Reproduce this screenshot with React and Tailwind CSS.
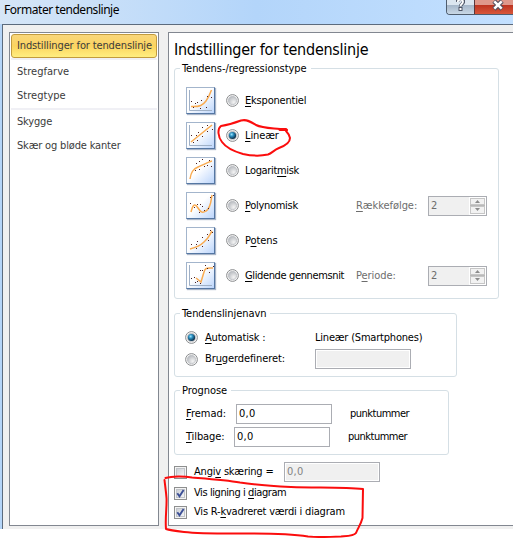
import React from "react";
import clsx from "clsx";

const menuGroups = [
  ["Indstillinger for tendenslinje"],
  ["Stregfarve", "Stregtype"],
  ["Skygge", "Skær og bløde kanter"],
];

const types = [
  {
    pre: "",
    key: "E",
    post: "ksponentiel",
    tracking: "tracking-[-0.2px]",
    axes: true,
    curve: "M5 19.5C14 20 17 18 20 14C23 10 24 7 25.5 3",
    dots: [[5, 14], [9, 16], [11, 15], [15, 13], [21, 9], [7, 20], [14, 21], [20, 20], [25, 10]],
  },
  {
    pre: "",
    key: "L",
    post: "ineær",
    tracking: "tracking-[-0.1px]",
    axes: true,
    curve: "M5 20L26 3",
    dots: [[5, 13], [10, 13], [12, 10], [16, 5], [21, 3], [7, 20], [11, 18], [16, 14], [21, 9], [26, 7]],
  },
  {
    pre: "Logarit",
    key: "m",
    post: "isk",
    tracking: "tracking-[-0.35px]",
    axes: false,
    curve: "M4 22C5 15 7 12 12 10C17 8 22 5 26 4",
    dots: [[10, 6], [13, 4], [16, 2], [23, 3], [9, 13], [13, 12], [18, 9], [21, 8], [25, 9]],
  },
  {
    pre: "",
    key: "P",
    post: "olynomisk",
    tracking: "tracking-[-0.3px]",
    axes: false,
    curve: "M5 20C7 12 9 11 12 16C15 21 17 21 20 19C25 16 25 8 26 3",
    dots: [[4, 11], [8, 15], [11, 12], [14, 12], [16, 14], [13, 20], [18, 18], [22, 16], [24, 5], [27, 3]],
  },
  {
    pre: "P",
    key: "o",
    post: "tens",
    tracking: "tracking-[-0.1px]",
    axes: false,
    curve: "M4 22C12 20 15 18 18 15C23 11 23 9 26 4",
    dots: [[5, 17], [10, 17], [11, 14], [16, 10], [21, 7], [10, 21], [16, 19], [22, 13], [26, 5], [24, 3]],
  },
  {
    pre: "",
    key: "G",
    post: "lidende gennemsnit",
    tracking: "tracking-[-0.37px]",
    axes: true,
    curve: "M10 16L15 20L18 10C19 6 21 6 24 6L27 6",
    dots: [[5, 16], [8, 15], [9, 20], [11, 19], [14, 21], [14, 8], [16, 8], [19, 3], [21, 6], [23, 10], [27, 4]],
  },
];

// One-line label with an underlined access key
const Label = ({ pre = "", hot = "", post = "", className }) => (
  <span className={clsx("block shrink-0 whitespace-nowrap", className)}>
    {pre}
    {hot && <span className="underline underline-offset-2">{hot}</span>}
    {post}
  </span>
);

const Radio = ({ checked }) => (
  <svg width="13" height="13" viewBox="0 0 13 13" className="shrink-0">
    <defs>
      <radialGradient id="radioOff" cx=".65" cy=".7" r=".7">
        <stop offset="0" stopColor="#f4f4f4" />
        <stop offset="1" stopColor="#b9bcc1" />
      </radialGradient>
      <radialGradient id="radioOn" cx=".38" cy=".35" r=".65">
        <stop offset="0" stopColor="#9de6ff" />
        <stop offset=".4" stopColor="#2b8fc0" />
        <stop offset="1" stopColor="#0b2b45" />
      </radialGradient>
    </defs>
    <circle cx="6.5" cy="6.5" r="5.9" fill="#f6f6f6" stroke="#8b8d8f" />
    <circle cx="6.5" cy="6.5" r="4.2" fill="url(#radioOff)" stroke="#b6b9be" strokeWidth=".6" />
    {checked && <circle cx="6.5" cy="6.5" r="3.6" fill="url(#radioOn)" />}
  </svg>
);

const Checkbox = ({ checked }) => (
  <span className="flex size-[13px] shrink-0 items-center justify-center border border-[#8e8f8f] bg-[#f4f4f4]">
    <span className="flex size-[9px] items-center justify-center border border-[#c0c3c8] bg-linear-to-br from-[#cdd0d6] to-[#f4f5f6]">
      {checked && (
        <svg width="9" height="9" viewBox="0 0 9 9" className="shrink-0">
          <path d="M1.3 4.3L3.5 7.3L7.6 1" fill="none" stroke="#3c4f96" strokeWidth="1.9" />
        </svg>
      )}
    </span>
  </span>
);

const Thumb = ({ axes, curve, dots }) => (
  <span className="block h-[27px] w-[29px] shrink-0 border border-t-[#a3b5cc] border-r-[#5577a3] border-b-[#5577a3] border-l-[#a3b5cc] bg-linear-to-br from-white from-45% to-[#bcd5fb] shadow-[1px_1px_1px_#a9b5c8]">
    <svg width="29" height="27" viewBox="0 0 29 27" className="-mt-px -ml-px">
      {axes && <path d="M3.5 3V23.5H26" fill="none" stroke="#9fb0c6" />}
      <path d={curve} fill="none" stroke="#f9ab51" strokeWidth="1.5" />
      {dots.map(([x, y], i) => (
        <rect key={i} x={x} y={y} width="1" height="1" fill="#4a2020" />
      ))}
    </svg>
  </span>
);

const Field = ({ value, disabled }) => (
  <span className="flex h-[20px] w-[96px] shrink-0 items-center border border-[#abadb3] p-px">
    <span
      className={clsx(
        "flex h-full w-full items-center pl-px tracking-[0.3px]",
        disabled ? "bg-[#f0f0f0] text-[#838383]" : "bg-white"
      )}
    >
      {value}
    </span>
  </span>
);

const Spinner = () => (
  <span className="flex h-[20px] w-[59px] border border-[#abadb3] bg-[#f0f0f0] text-[#6d6d6d]">
    <span className="flex flex-1 items-center pl-[2px]">2</span>
    <span className="flex w-[17px] flex-col gap-px border border-white bg-[#b9b9b9]">
      <span className="flex flex-1 items-center justify-center border border-[#c6c6c6] bg-[#f2f2f2]">
        <svg width="5" height="3" viewBox="0 0 5 3">
          <path d="M0 3L2.5 0L5 3Z" fill="#8c8c8c" />
        </svg>
      </span>
      <span className="flex flex-1 items-center justify-center border border-[#c6c6c6] bg-[#f2f2f2]">
        <svg width="5" height="3" viewBox="0 0 5 3">
          <path d="M0 0L2.5 3L5 0Z" fill="#8c8c8c" />
        </svg>
      </span>
    </span>
  </span>
);

const Group = ({ title, className, children }) => (
  <section className={clsx("relative rounded-[3px] border border-[#d5dfe5]", className)}>
    <h2 className="absolute -top-[7px] left-[5px] bg-white pr-[4px] pl-[2px] tracking-[-0.06px] whitespace-nowrap">
      {title}
    </h2>
    {children}
  </section>
);

const App = () => {
  return (
    <div className="relative h-[538px] w-[513px] overflow-hidden bg-white font-['DejaVu_Sans_Condensed','DejaVu_Sans',sans-serif] text-[11px] leading-[14px] tracking-[-0.2px] text-black">
      <div className="flex h-[529px] flex-col bg-linear-to-r from-[#b5d5f8] to-[#b9dbff]">
        {/* TITLE BAR */}
        <header className="flex h-[24px] shrink-0 items-start justify-between bg-linear-to-r from-[#d6e6f7] via-[#b3d5fa] to-[#c3e0ff] pl-[4px]">
          <h1 className="pt-px font-['Noto_Sans',sans-serif] text-[12px] leading-[18px] tracking-[-0.47px]">
            Formater tendenslinje
          </h1>
          <div className="flex h-[15px] w-[67px] overflow-hidden rounded-bl-[4px] border-b border-l border-[#4f5d6e]">
            <div className="flex w-[28px] justify-center border-r border-[#59363b] bg-linear-to-b from-[#dce6f0] from-35% via-[#a5b6c9] via-36% to-[#c9d8e6]">
              <svg width="9" height="14" viewBox="0 0 9 14" className="-mt-[2px]">
                <path d="M1.5 4C1.5 0 7.5 0 7.5 3.5C7.5 6 4.5 6 4.5 8.5" fill="none" stroke="#4e5566" strokeWidth="3.4" />
                <rect x="2.5" y="9" width="4" height="4" fill="#4e5566" />
                <path d="M1.7 4C2 1 7 1 7 3.7C7 6 4.5 6 4.5 8.2" fill="none" stroke="#fff" strokeWidth="1.8" />
                <rect x="3.5" y="10" width="2" height="2" fill="#fff" />
              </svg>
            </div>
            <div className="flex flex-1 bg-linear-to-b from-[#df988b] from-35% via-[#bd321f] via-36% to-[#d8573b] pl-[17px]">
              <svg width="12" height="12" viewBox="0 0 12 12" className="-mt-px shrink-0">
                <path d="M2 2L10 10M10 2L2 10" stroke="#55505e" strokeWidth="4.6" />
                <path d="M2.3 2.3L9.7 9.7M9.7 2.3L2.3 9.7" stroke="#fff" strokeWidth="2.5" />
              </svg>
            </div>
          </div>
        </header>

        <div className="ml-[2px] flex min-h-0 flex-1 gap-[9px] border-t border-l border-[#5c6b7d] bg-[#f0f0f0] pt-[7px] pb-[3px] pl-[6px]">
          {/* MENU */}
          <nav className="w-[150px] shrink-0 border border-[#828790] bg-white p-px text-[#3b3b3b]">
            {menuGroups.map((items, g) => (
              <div
                key={g}
                className={clsx(g < menuGroups.length - 1 && "border-b-2 border-[#f0f0f5]")}
              >
                {items.map((item) => (
                  <div
                    key={item}
                    className={clsx(
                      "flex h-[24px] items-center whitespace-nowrap",
                      g === 0 &&
                        "rounded-[3px] border border-[#c29b3d] bg-linear-to-b from-[#f9d67a] via-[#fbd45f] to-[#ffee80] pl-[5px] tracking-[-0.13px]",
                      g === 1 && "pl-[6px] tracking-[0.03px]",
                      g === 2 && "pl-[6px] tracking-[-0.17px]"
                    )}
                  >
                    {item}
                  </div>
                ))}
              </div>
            ))}
          </nav>

          {/* SETTINGS */}
          <main className="flex-1 border border-r-0 border-[#828790] bg-white pl-[5px]">
            <h2 className="pt-[7px] text-[16px] leading-[20px] tracking-[-0.25px] whitespace-nowrap">
              Indstillinger for tendenslinje
            </h2>

            <Group title="Tendens-/regressionstype" className="mt-[8px] h-[231px] w-[325px] pt-[18px] pl-[11px]">
              <div className="flex flex-col gap-[8px]">
                {types.map((t, i) => (
                  <div key={i} className="flex h-[27px] items-center">
                    <Thumb axes={t.axes} curve={t.curve} dots={t.dots} />
                    <span className="mb-px ml-[11px]">
                      <Radio checked={i === 1} />
                    </span>
                    <Label
                      pre={t.pre}
                      hot={t.key}
                      post={t.post}
                      className={clsx("ml-[6px] w-[111px]", t.tracking)}
                    />
                    {i === 3 && (
                      <>
                        <Label hot="R" post="ækkefølge:" className="w-[72px] tracking-[-0.05px] text-[#6d6d6d]" />
                        <Spinner />
                      </>
                    )}
                    {i === 5 && (
                      <>
                        <Label pre="P" hot="e" post="riode:" className="w-[72px] tracking-[-0.05px] text-[#6d6d6d]" />
                        <Spinner />
                      </>
                    )}
                  </div>
                ))}
              </div>
            </Group>

            <Group title="Tendenslinjenavn" className="mt-[14px] h-[64px] w-[283px] pt-[13px] pl-[10px]">
              <div className="flex h-[21px] items-center">
                <Radio checked />
                <Label hot="A" post="utomatisk :" className="ml-[7px] w-[110px]" />
                <Label pre="Lineær (Smartphones)" />
              </div>
              <div className="flex h-[22px] items-center">
                <Radio />
                <Label pre="Br" hot="u" post="gerdefineret:" className="ml-[7px] w-[110px] tracking-[-0.1px]" />
                <Field disabled />
              </div>
            </Group>

            <Group title="Prognose" className="mt-[13px] h-[65px] w-[275px] pt-[13px] pl-[11px]">
              <div className="flex h-[20px] items-center">
                <Label hot="F" post="remad:" className="w-[50px] tracking-[0px]" />
                <Field value="0,0" />
                <Label pre="punktummer" className="ml-[18px] tracking-[-0.5px]" />
              </div>
              <div className="mt-[3px] flex h-[20px] items-center">
                <Label hot="T" post="ilbage:" className="w-[48px] tracking-[-0.1px]" />
                <Field value="0,0" />
                <Label pre="punktummer" className="ml-[18px] tracking-[-0.5px]" />
              </div>
            </Group>

            <div className="mt-[7px] flex h-[20px] items-center">
              <Checkbox />
              <Label pre="Angi" hot="v" post=" skæring =" className="ml-[7px] w-[90px]" />
              <Field value="0,0" disabled />
            </div>
            <div className="mt-px flex h-[20px] items-center">
              <Checkbox checked />
              <Label pre="Vis ligning i " hot="d" post="iagram" className="ml-[7px] tracking-[-0.42px]" />
            </div>
            <div className="flex h-[18px] items-center">
              <Checkbox checked />
              <Label pre="Vis R-" hot="k" post="vadreret værdi i diagram" className="ml-[7px]" />
            </div>
          </main>
        </div>
      </div>

      {/* RED PEN MARKS */}
      <svg
        width="513"
        height="538"
        viewBox="0 0 513 538"
        className="pointer-events-none absolute top-0 left-0"
        fill="none"
        stroke="#fb0d0d"
        strokeWidth="2"
        strokeLinecap="round"
        strokeLinejoin="round"
      >
        <path d="M287 130L280 129C270 128 262 128 256 125C250 121 246 119 241 120.500C234 123 227 125 221 126C217 129 218 137 222 142C227 149 236 152 243 154C252 156 261 156 268 154.500C272 153 274 150 279 148C287 145 290 142 290 138C289 134 288 133 286 131" />
        <path d="M280 129.500L286 129.500" strokeWidth="3" />
        <path d="M165.500 478C172 476 184 476 192 477.500C211 479 226 480 240 482.500C257 485 274 486 291 487C315 488 343 487 363 489L362.500 518C361 524 358 528 356 533C354 536 347 536 341 536.500C330 537 318 537.500 308 536.500C292 534 272 533.500 252 533.500C228 533.500 202 534 184 532C176 531 169 530 166 529C165 519 167 506 166.500 498C166 491 165 485 164.500 480" />
      </svg>
    </div>
  );
};

export default App;
